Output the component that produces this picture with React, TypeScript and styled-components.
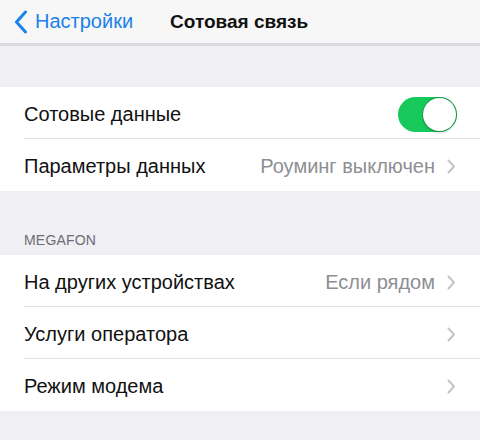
import styled, { createGlobalStyle } from 'styled-components'

const GlobalStyle = createGlobalStyle`
  html, body {
    margin: 0;
    padding: 0;
    background: #efeff4;
  }
  body {
    font-family: "Liberation Sans", "Noto Sans", Arial, sans-serif;
    -webkit-font-smoothing: antialiased;
  }
`

type Item = {
  title: string;
  value?: string;
  toggle?: boolean;
}

const mainGroup: Item[] = [
  { title: 'Сотовые данные', toggle: true },
  { title: 'Параметры данных', value: 'Роуминг выключен' },
]

const carrierGroup: Item[] = [
  { title: 'На других устройствах', value: 'Если рядом' },
  { title: 'Услуги оператора' },
  { title: 'Режим модема' },
]

export default function App() {
  return (
    <Screen>
      <GlobalStyle />
      <NavBar>
        <BackButton>
          <svg width="14" height="24" viewBox="0 0 14 24">
            <path d="M11.5 2 L2.5 12 L11.5 22" fill="none" stroke="#1a82e8" strokeWidth="3" strokeLinecap="round" strokeLinejoin="round" />
          </svg>
          <span>Настройки</span>
        </BackButton>
        <NavTitle>Сотовая связь</NavTitle>
      </NavBar>

      <Spacer $h={41} />
      <Group>
        {mainGroup.map((item, i) => (
          <SettingsRow key={item.title} item={item} last={i === mainGroup.length - 1} />
        ))}
      </Group>

      <SectionHeader>MEGAFON</SectionHeader>
      <Group>
        {carrierGroup.map((item, i) => (
          <SettingsRow key={item.title} item={item} last={i === carrierGroup.length - 1} />
        ))}
      </Group>
    </Screen>
  )
}

function SettingsRow({ item, last }: { item: Item; last: boolean }) {
  return (
    <Row>
      <RowInner $last={last}>
        <Title>{item.title}</Title>
        {item.toggle ? (
          <Toggle $on>
            <Knob />
          </Toggle>
        ) : (
          <Accessory>
            {item.value && <Value>{item.value}</Value>}
            <svg width="9" height="15" viewBox="0 0 9 15">
              <path d="M1.5 1.5 L7 7.5 L1.5 13.5" fill="none" stroke="#c4c4c9" strokeWidth="2" strokeLinecap="round" strokeLinejoin="round" />
            </svg>
          </Accessory>
        )}
      </RowInner>
    </Row>
  )
}

const Screen = styled.div`
  width: 480px;
  height: 440px;
  background: #efeff4;
  overflow: hidden;
`

const NavBar = styled.div`
  height: 43px;
  background: #f7f7f8;
  border-bottom: 3px solid #dcdce0;
  display: flex;
  align-items: center;
  padding-left: 14px;
  gap: 37px;
`

const BackButton = styled.div`
  display: flex;
  align-items: center;
  gap: 7px;
  color: #1a82e8;
  font-size: 20px;
`

const NavTitle = styled.div`
  font-size: 19px;
  font-weight: 700;
  color: #111;
`

const Spacer = styled.div<{ $h: number }>`
  height: ${p => p.$h}px;
`

const Group = styled.div`
  background: #fff;
`

const Row = styled.div`
  padding-left: 24px;
`

const RowInner = styled.div<{ $last: boolean }>`
  height: 52px;
  box-sizing: border-box;
  display: flex;
  align-items: center;
  justify-content: space-between;
  padding: 3px 24px 0 0;
  border-bottom: ${p => (p.$last ? 'none' : '1px solid #e2e2e6')};
`

const Title = styled.div`
  font-size: 20px;
  color: #111;
`

const Accessory = styled.div`
  display: flex;
  align-items: center;
  gap: 12px;
`

const Value = styled.div`
  font-size: 20px;
  color: #8e8e93;
`

const Toggle = styled.div<{ $on: boolean }>`
  width: 59px;
  height: 35px;
  border-radius: 18px;
  background: ${p => (p.$on ? '#17c95a' : '#e5e5ea')};
  display: flex;
  align-items: center;
  justify-content: ${p => (p.$on ? 'flex-end' : 'flex-start')};
  padding: 0 1px;
  box-sizing: border-box;
  margin-right: -1px;
`

const Knob = styled.div`
  width: 33px;
  height: 33px;
  border-radius: 50%;
  background: #fff;
  box-shadow: 0 0 0 1px rgba(20, 120, 60, 0.5), 0 2px 3px rgba(0, 0, 0, 0.15);
`

const SectionHeader = styled.div`
  height: 64px;
  box-sizing: border-box;
  padding: 0 0 7px 24px;
  display: flex;
  align-items: flex-end;
  font-size: 14px;
  color: #6d6d72;
  letter-spacing: 0.2px;
`
